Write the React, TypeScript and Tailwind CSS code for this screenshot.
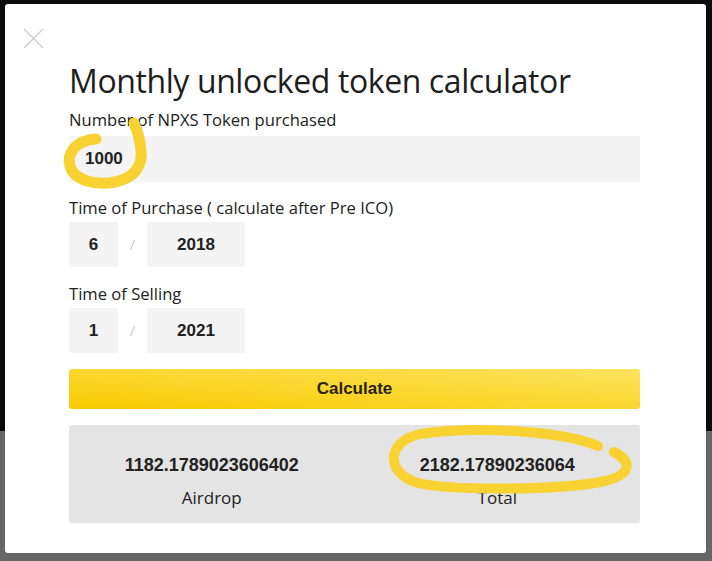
import React from "react";

const sans = "font-['Open_Sans','Noto_Sans',sans-serif]";
const bold = "font-['Liberation_Sans',Arial,sans-serif] font-bold";

function DateRow({ month, year }: { month: string; year: string }) {
  return (
    <div className="flex items-center h-[45px]">
      <div className={`w-[49px] h-full bg-[#f4f4f4] rounded-[2px] flex items-center justify-center text-[17px] text-[#222] ${bold}`}>
        {month}
      </div>
      <div className={`w-[29px] text-center text-[15px] text-[#ccc] ${sans}`}>/</div>
      <div className={`w-[98px] h-full bg-[#f4f4f4] rounded-[2px] flex items-center justify-center text-[17px] text-[#222] ${bold}`}>
        {year}
      </div>
    </div>
  );
}

export default function App() {
  return (
    <div className="relative w-[712px] h-[561px] overflow-hidden pt-[4px] pl-[5px] bg-[linear-gradient(to_bottom,#0c0b0b_431px,#666_431px)]">
      <div className="relative w-[701px] h-[549px] bg-white rounded-[3px] pl-[64px] pr-[66px] text-[#222]">
        {/* close */}
        <svg className="absolute left-[18px] top-[24px]" width="21" height="21" viewBox="0 0 21 21">
          <path d="M1 1L20 20M20 1L1 20" stroke="#cfcfcf" strokeWidth="1.6" />
        </svg>

        <h1 className={`pt-[58px] text-[32px] leading-[38px] tracking-[-0.4px] text-[#1e1e1e] ${sans}`}>
          Monthly unlocked token calculator
        </h1>

        <p className={`mt-[9px] text-[16.6px] leading-[22px] ${sans}`}>Number of NPXS Token purchased</p>
        <div className={`mt-[5px] h-[46px] bg-[#f4f4f4] rounded-[2px] flex items-center pl-[16px] text-[17px] ${bold}`}>
          1000
        </div>

        <p className={`mt-[15px] text-[16.6px] leading-[22px] ${sans}`}>Time of Purchase ( calculate after Pre ICO)</p>
        <div className="mt-[3px]">
          <DateRow month="6" year="2018" />
        </div>

        <p className={`mt-[16px] text-[16.6px] leading-[22px] ${sans}`}>Time of Selling</p>
        <div className="mt-[3px]">
          <DateRow month="1" year="2021" />
        </div>

        <button className={`mt-[16px] w-full h-[40px] rounded-[3px] bg-[linear-gradient(to_top_right,#f8cb00,#fde35e)] text-[17px] text-[#2a2206] ${bold}`}>
          Calculate
        </button>

        <div className="mt-[16px] h-[98px] bg-[#e4e4e4] rounded-[3px] grid grid-cols-2 pt-[28px]">
          <div className="flex flex-col items-center">
            <span className={`text-[18px] leading-[24px] ${bold}`}>1182.1789023606402</span>
            <span className={`mt-[9px] text-[17px] leading-[24px] ${sans}`}>Airdrop</span>
          </div>
          <div className="flex flex-col items-center">
            <span className={`text-[18px] leading-[24px] ${bold}`}>2182.17890236064</span>
            <span className={`mt-[9px] text-[17px] leading-[24px] ${sans}`}>Total</span>
          </div>
        </div>
      </div>

      {/* hand-drawn highlights */}
      <svg className="absolute left-0 top-0 pointer-events-none" width="712" height="561" viewBox="0 0 712 561">
        <path
          d="M96,139 C78,140 66,152 70,166 C74,180 95,186 115,182 C135,178 143,165 141,150 C140,138 137,130 134,123"
          fill="none"
          stroke="#f8d232"
          strokeWidth="11"
          strokeLinecap="round"
        />
        <path
          d="M598,446 C560,430 470,426 420,434 C385,442 386,474 418,483 C452,491 560,490 600,482 C632,476 633,462 614,452"
          fill="none"
          stroke="#f8d232"
          strokeWidth="10"
          strokeLinecap="round"
        />
      </svg>
    </div>
  );
}
